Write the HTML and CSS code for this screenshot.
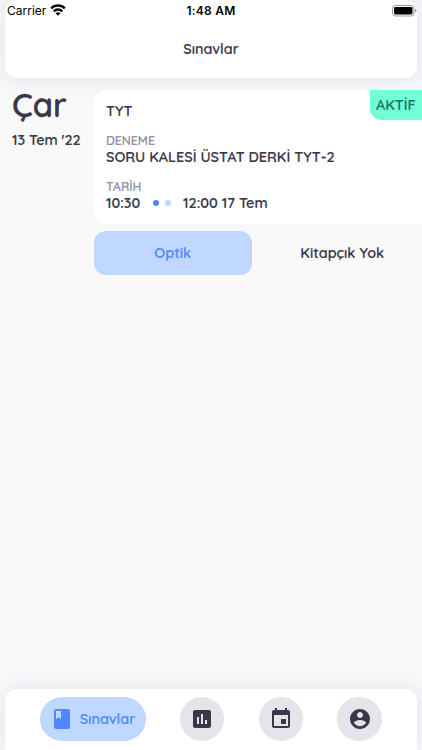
FILE: index.html
```html
<!DOCTYPE html>
<html lang="tr">
<head>
<meta charset="utf-8">
<title>Sınavlar</title>
<link rel="stylesheet" href="styles.css">
</head>
<body>
<div class="app">
  <header class="header">
    <div class="status">
      <div class="carrier"><span>Carrier</span>
        <svg width="16" height="12" viewBox="0 0 16 12"><path fill="none" stroke="#000" stroke-width="2.4" d="M1.200 4.300a9.600 9.600 0 0 1 13.600 0M3.800 7.300a5.900 5.900 0 0 1 8.400 0"/><path d="M5.500 9.300a3.400 3.400 0 0 1 5 0L8 11.800z"/></svg>
      </div>
      <div class="clock">1:48 AM</div>
      <svg class="battery" width="25" height="12" viewBox="0 0 25 12"><rect x=".5" y=".5" width="21.5" height="10.5" rx="2.8" fill="#fff" stroke="#999"/><rect x="2" y="2" width="18.5" height="7.5" rx="1.4"/><path d="M23.200 4v3.600q1.200-.5 1.200-1.800T23.200 4z" fill="#888"/></svg>
    </div>
    <h1 class="title">Sınavlar</h1>
  </header>
  <main class="content">
    <div class="date"><div class="day">Çar</div><div class="full-date">13 Tem '22</div></div>
    <div class="exam">
      <section class="card">
        <span class="badge">AKTİF</span>
        <div class="type">TYT</div>
        <div class="label label-name">DENEME</div>
        <div class="value name">SORU KALESİ ÜSTAT DERKİ TYT-2</div>
        <div class="label label-date">TARİH</div>
        <div class="value times"><span class="start">10:30</span><i class="dot"></i><i class="dot pale"></i><span class="end">12:00 17 Tem</span></div>
      </section>
      <div class="actions"><div class="button primary"><span>Optik</span></div><div class="button"><span class="booklet">Kitapçık Yok</span></div></div>
    </div>
  </main>
  <nav class="nav">
    <div class="tab active"><svg class="icon" viewBox="0 0 24 24"><path d="M18 2H6c-1.100 0-2 .9-2 2v16c0 1.100.9 2 2 2h12c1.100 0 2-.9 2-2V4c0-1.100-.9-2-2-2zM6 4h5v8l-2.500-1.500L6 12V4z"/></svg><span>Sınavlar</span></div>
    <div class="tab"><svg class="icon" viewBox="0 0 24 24"><path d="M19 3H5c-1.100 0-2 .9-2 2v14c0 1.100.9 2 2 2h14c1.100 0 2-.9 2-2V5c0-1.100-.9-2-2-2zM9 17H7v-7h2v7zm4 0h-2V7h2v10zm4 0h-2v-4h2v4z"/></svg></div>
    <div class="tab"><svg class="icon" viewBox="0 0 24 24"><path d="M17 12h-5v5h5v-5zM16 1v2H8V1H6v2H5c-1.110 0-1.990.9-1.990 2L3 19c0 1.100.89 2 2 2h14c1.100 0 2-.9 2-2V5c0-1.100-.9-2-2-2h-1V1h-2zm3 18H5V8h14v11z"/></svg></div>
    <div class="tab"><svg class="icon" viewBox="0 0 24 24"><path d="M12 2C6.480 2 2 6.480 2 12s4.480 10 10 10 10-4.480 10-10S17.520 2 12 2zm0 3c1.660 0 3 1.340 3 3s-1.340 3-3 3-3-1.340-3-3 1.340-3 3-3zm0 14.200c-2.500 0-4.710-1.280-6-3.220.030-1.990 4-3.080 6-3.080 1.990 0 5.970 1.090 6 3.080-1.290 1.940-3.500 3.220-6 3.220z"/></svg></div>
  </nav>
</div>
</body>
</html>
```
FILE: styles.css
```css
* { box-sizing: border-box; }
body { margin: 0; background: #f9f9f9; color: #38384a; font-family: Quicksand, Lato, sans-serif; font-weight: 600; font-size: 14.4px; -webkit-text-stroke: .15px; }
.app { width: 422px; height: 750px; display: flex; flex-direction: column; overflow: hidden; }
.header { height: 78px; flex: none; margin: 0 5px; background: #fff; border-radius: 12px; box-shadow: 0 0 18px 4px #e8e7f1; }
.status { height: 22px; display: grid; grid-template-columns: 1fr auto 1fr; align-items: center; font-family: Inter, sans-serif; color: #000; -webkit-text-stroke: 0; }
.carrier { display: flex; align-items: center; gap: 4px; padding-left: 2px; margin-top: -1px; font-size: 12px; font-weight: 400; letter-spacing: 0; }
.carrier svg { margin-top: -1px; }
.clock { font-size: 12px; font-weight: 600; letter-spacing: .25px; margin-top: -1px; }
.battery { justify-self: end; margin-top: -1px; }
.title { margin: 18px 0 0; text-align: center; font-size: 14.4px; font-weight: 600; line-height: 18px; }
.content { flex: 1; display: flex; padding-top: 12px; }
.date { width: 94px; flex: none; padding-left: 12px; white-space: nowrap; }
.day { font-size: 32.6px; line-height: 30px; -webkit-text-stroke: .3px; }
.full-date { margin-top: 11px; line-height: 18px; letter-spacing: -.05px; }
.exam { flex: 1; }
.card { position: relative; height: 134px; padding: 12px 0 0 12px; background: #fff; border-radius: 12px 0 0 12px; }
.badge { position: absolute; top: 0; right: 0; width: 52px; height: 30px; padding-left: 6px; border-bottom-left-radius: 12px; background: #72ffd5; color: #16785c; line-height: 30px; }
.type { line-height: 18px; }
.label { color: #9290a3; font-size: 12.3px; line-height: 16px; }
.label-name { margin-top: 13px; }
.value { line-height: 18px; margin-top: -1px; white-space: nowrap; }
.label-date { margin-top: 13px; }
.times { display: flex; align-items: center; }
.start { width: 47px; }
.dot { width: 6px; height: 6px; margin-right: 6px; border-radius: 50%; background: #5086fa; }
.dot.pale { background: #c0d7ff; }
.end { margin-left: 6px; }
.actions { display: flex; gap: 12px; margin: 6.500px 1px 0 0; }
.button { flex: 1; height: 44.500px; display: flex; align-items: center; justify-content: center; border-radius: 12px; }
.primary { background: #c0d8ff; color: #4f88ff; }
.nav { flex: none; height: 61.500px; margin: 0 5px; padding: 8px 35px 0 34.500px; display: flex; justify-content: space-between; background: #fff; border-radius: 12px 12px 0 0; box-shadow: 0 0 18px 4px #e8e7f1; }
.tab { width: 44.500px; height: 44.500px; display: flex; align-items: center; justify-content: center; border-radius: 23px; background: #e5e4eb; color: #38384a; }
.tab.active { width: 106px; gap: 6px; background: #c0d8ff; color: #4f88ff; }
.icon { width: 24px; height: 24px; flex: none; fill: currentColor; }
```
